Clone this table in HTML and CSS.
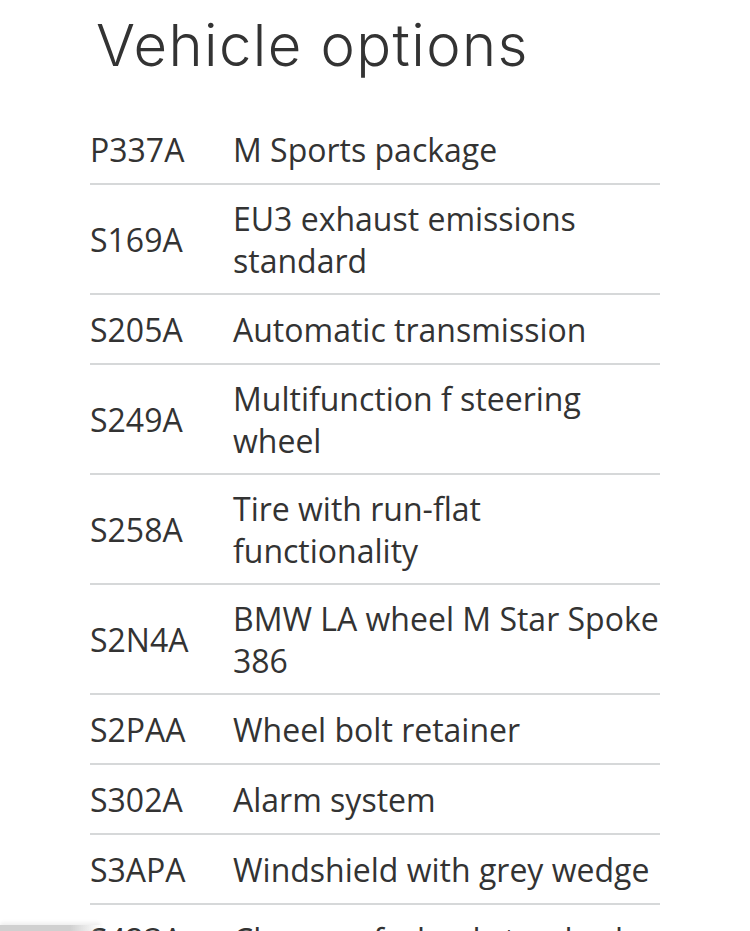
FILE: index.html
```html
<!DOCTYPE html>
<html lang="en">
<head>
<meta charset="utf-8">
<title>Vehicle options</title>
<link rel="stylesheet" href="styles.css">
</head>
<body>
<main class="page">
  <h1 class="title">Vehicle options</h1>
  <table class="options">
    <tbody>
      <tr><td class="code">P337A</td><td class="desc">M Sports package</td></tr>
      <tr><td class="code">S169A</td><td class="desc">EU3 exhaust emissions standard</td></tr>
      <tr><td class="code">S205A</td><td class="desc">Automatic transmission</td></tr>
      <tr><td class="code">S249A</td><td class="desc">Multifunction f steering wheel</td></tr>
      <tr><td class="code">S258A</td><td class="desc">Tire with run-flat functionality</td></tr>
      <tr><td class="code">S2N4A</td><td class="desc">BMW LA wheel M Star Spoke 386</td></tr>
      <tr><td class="code">S2PAA</td><td class="desc">Wheel bolt retainer</td></tr>
      <tr><td class="code">S302A</td><td class="desc">Alarm system</td></tr>
      <tr><td class="code">S3APA</td><td class="desc">Windshield with grey wedge</td></tr>
      <tr><td class="code">S423A</td><td class="desc">Change of wheel standard</td></tr>
    </tbody>
  </table>
</main>
<div class="shadow-tab"></div>
</body>
</html>
```
FILE: styles.css
```css
html, body {
  margin: 0;
  padding: 0;
  background: #ffffff;
}
body {
  color: #333333;
  font-family: "Open Sans", "Liberation Sans", sans-serif;
  overflow: hidden;
  height: 931px;
}
.page {
  width: 570px;
  margin-left: 90px;
}
.title {
  margin: 0;
  padding: 10px 0 0 6px;
  font-family: "Inter", "Lato", sans-serif;
  font-weight: 300;
  font-size: 58px;
  line-height: 70px;
  color: #333333;
  letter-spacing: 1.4px;
}
.options {
  margin-top: 35px;
  width: 570px;
  border-collapse: collapse;
}
.options td {
  font-size: 32px;
  line-height: 42px;
  border-bottom: 2px solid #d6d8d9;
  vertical-align: middle;
}
.options .code {
  width: 143px;
  padding: 14px 0 12px 0;
}
.options .desc {
  padding: 13px 0 11px 0;
}
.shadow-tab {
  position: fixed;
  left: 0;
  bottom: 0;
  width: 100px;
  height: 6px;
  background: linear-gradient(to right, #d0d0d0 70%, rgba(220,220,220,0));
  box-shadow: 0 -2px 4px rgba(0,0,0,0.08);
}
```
